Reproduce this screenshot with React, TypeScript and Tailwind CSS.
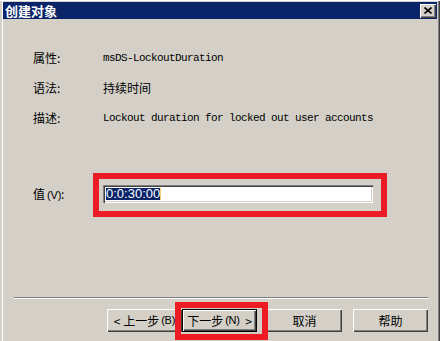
const cjk = "font-['Noto_Sans_CJK_SC',sans-serif]";
const mono = "font-['Liberation_Mono','Noto_Sans_CJK_SC',monospace] text-[11px] tracking-[-0.6px]";

function WinButton({
  children,
  isDefault = false,
}: {
  children: React.ReactNode;
  isDefault?: boolean;
}) {
  return (
    <div
      className={
        "flex h-[23px] w-[75px] items-center justify-center whitespace-nowrap bg-[#d4d0c8] text-[12px] leading-none text-black " +
        cjk +
        (isDefault
          ? " border border-black shadow-[inset_1px_1px_0_#ffffff,inset_-1px_-1px_0_#404040,inset_-2px_-2px_0_#808080]"
          : " shadow-[inset_1px_1px_0_#ffffff,inset_-1px_-1px_0_#404040,inset_-2px_-2px_0_#808080]")
      }
    >
      {children}
    </div>
  );
}

function Hotkey({ k }: { k: string }) {
  return (
    <span className="ml-[2px] font-['Liberation_Sans',sans-serif] text-[11px] tracking-[-0.2px]">
      ({k})
    </span>
  );
}

export default function App() {
  const rows = [
    { label: "属性:", value: "msDS-LockoutDuration", mono: true },
    { label: "语法:", value: "持续时间", mono: false },
    { label: "描述:", value: "Lockout duration for locked out user accounts", mono: true },
  ];

  return (
    <div className="relative h-[341px] w-[440px] overflow-hidden bg-[#d4d0c8] shadow-[inset_0_1px_0_#ffffff,inset_2px_0_0_#d4d0c8,inset_3px_0_0_#ffffff,inset_-1px_0_0_#404040,inset_-2px_0_0_#808080]">
      {/* title bar */}
      <div className="mx-[3px] mt-[2px] flex h-[17px] items-center justify-between bg-[#0a246a] pl-[2px] pr-[1px]">
        <span className={"text-[13px] font-bold leading-none text-white " + cjk}>创建对象</span>
        <div className="flex h-[14px] w-[16px] items-center justify-center bg-[#d4d0c8] shadow-[inset_1px_1px_0_#ffffff,inset_-1px_-1px_0_#404040,inset_-2px_-2px_0_#808080]">
          <svg width="8" height="7" viewBox="0 0 8 7">
            <path d="M0.5 0.5 L7.5 6.5 M7.5 0.5 L0.5 6.5" stroke="#000" strokeWidth="1.6" />
          </svg>
        </div>
      </div>

      {/* attribute rows */}
      <div className="mt-[24px] pl-[33px]">
        {rows.map((r) => (
          <div key={r.label} className="flex h-[30px] items-center text-black">
            <span className={"w-[70px] text-[12px] " + cjk}>{r.label}</span>
            <span className={r.mono ? mono : "text-[12px] " + cjk}>{r.value}</span>
          </div>
        ))}
      </div>

      {/* value row */}
      <div className="mt-[52px] flex h-[18px] items-center pl-[33px]">
        <span className={"w-[70px] text-[12px] text-black " + cjk}>
          值<Hotkey k="V" />:
        </span>
        <div className="flex h-[18px] w-[270px] items-center bg-white pl-[3px] shadow-[inset_1px_1px_0_#808080,inset_2px_2px_0_#404040,inset_-1px_-1px_0_#ffffff,inset_-2px_-2px_0_#d4d0c8]">
          <span className="bg-[#0a246a] font-['Liberation_Sans',sans-serif] text-[13px] leading-[12px] text-white">
            0:0:30:00
          </span>
          <span className="h-[12px] w-[1px] bg-[#f0d070]" />
        </div>
      </div>

      {/* separator */}
      <div className="ml-[14px] mt-[94px] h-[2px] w-[414px] border-t border-b border-t-[#808080] border-b-white" />

      {/* buttons */}
      <div className="ml-[107px] mt-[10px] flex">
        <WinButton>
          &lt;&nbsp;上一步<Hotkey k="B" />
        </WinButton>
        <WinButton isDefault>
          下一步<Hotkey k="N" />&nbsp;&nbsp;&gt;
        </WinButton>
        <div className="ml-[10px]">
          <WinButton>取消</WinButton>
        </div>
        <div className="ml-[11px]">
          <WinButton>帮助</WinButton>
        </div>
      </div>

      {/* red annotation boxes */}
      <div className="pointer-events-none absolute left-[93px] top-[173px] h-[44px] w-[294px] border-[6px] border-[#ed1c24]" />
      <div className="pointer-events-none absolute left-[175px] top-[302px] h-[38px] w-[93px] border-[6px] border-[#ed1c24]" />
    </div>
  );
}
